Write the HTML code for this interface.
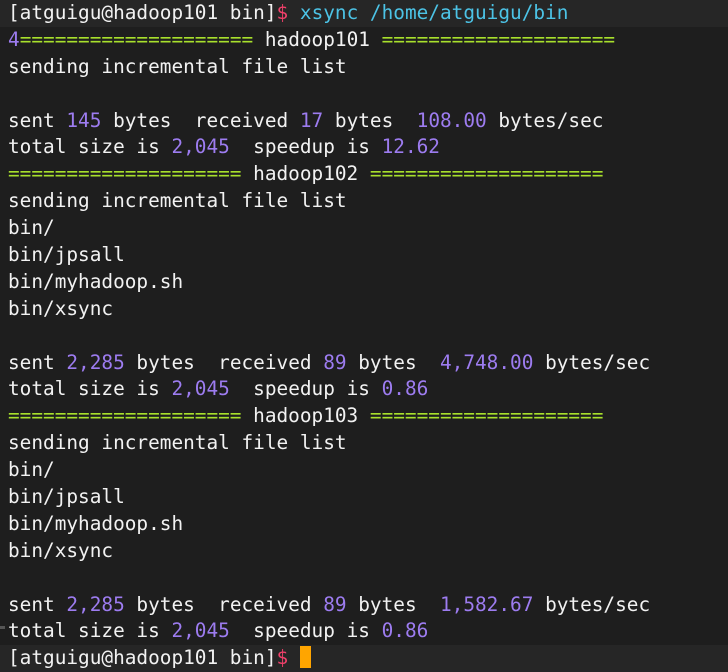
<!DOCTYPE html>
<html><head><meta charset="utf-8"><style>
html,body{margin:0;padding:0;background:#1e1e1e;width:728px;height:670px;overflow:hidden}
.t{position:absolute;left:0;top:0px;width:728px;font-family:"DejaVu Sans Mono","Liberation Mono",monospace;font-size:19.4px;line-height:26.9px;color:#f2f2f2}
.l{padding-left:8px;height:26.9px;white-space:pre}
.p{background:#262626}
.n{color:#9d7cf0}.g{color:#a8e02c}.c{color:#4cc3e6}.d{color:#f0406a}
.cur{display:inline-block;width:11px;height:22px;background:#ffa500;vertical-align:-4px}
.bar{position:absolute;left:0;width:3px;background:#555}
</style></head><body>
<div class="bar" style="top:3px;height:18px"></div>
<div class="bar" style="top:626px;height:3px;width:5px"></div>
<div class="bar" style="top:648px;height:20px"></div>
<div class="t"><div class="l p">[atguigu@hadoop101 bin]<span class="d">$</span> <span class="c">xsync /home/atguigu/bin</span></div><div class="l"><span class="n">4</span><span class="g">====================</span> hadoop101 <span class="g">====================</span></div><div class="l">sending incremental file list</div><div class="l"> </div><div class="l">sent <span class="n">145</span> bytes  received <span class="n">17</span> bytes  <span class="n">108.00</span> bytes/sec</div><div class="l">total size is <span class="n">2,045</span>  speedup is <span class="n">12.62</span></div><div class="l"><span class="g">====================</span> hadoop102 <span class="g">====================</span></div><div class="l">sending incremental file list</div><div class="l">bin/</div><div class="l">bin/jpsall</div><div class="l">bin/myhadoop.sh</div><div class="l">bin/xsync</div><div class="l"> </div><div class="l">sent <span class="n">2,285</span> bytes  received <span class="n">89</span> bytes  <span class="n">4,748.00</span> bytes/sec</div><div class="l">total size is <span class="n">2,045</span>  speedup is <span class="n">0.86</span></div><div class="l"><span class="g">====================</span> hadoop103 <span class="g">====================</span></div><div class="l">sending incremental file list</div><div class="l">bin/</div><div class="l">bin/jpsall</div><div class="l">bin/myhadoop.sh</div><div class="l">bin/xsync</div><div class="l"> </div><div class="l">sent <span class="n">2,285</span> bytes  received <span class="n">89</span> bytes  <span class="n">1,582.67</span> bytes/sec</div><div class="l">total size is <span class="n">2,045</span>  speedup is <span class="n">0.86</span></div><div class="l p">[atguigu@hadoop101 bin]<span class="d">$</span> <span class="cur"></span></div></div>
</body></html>
